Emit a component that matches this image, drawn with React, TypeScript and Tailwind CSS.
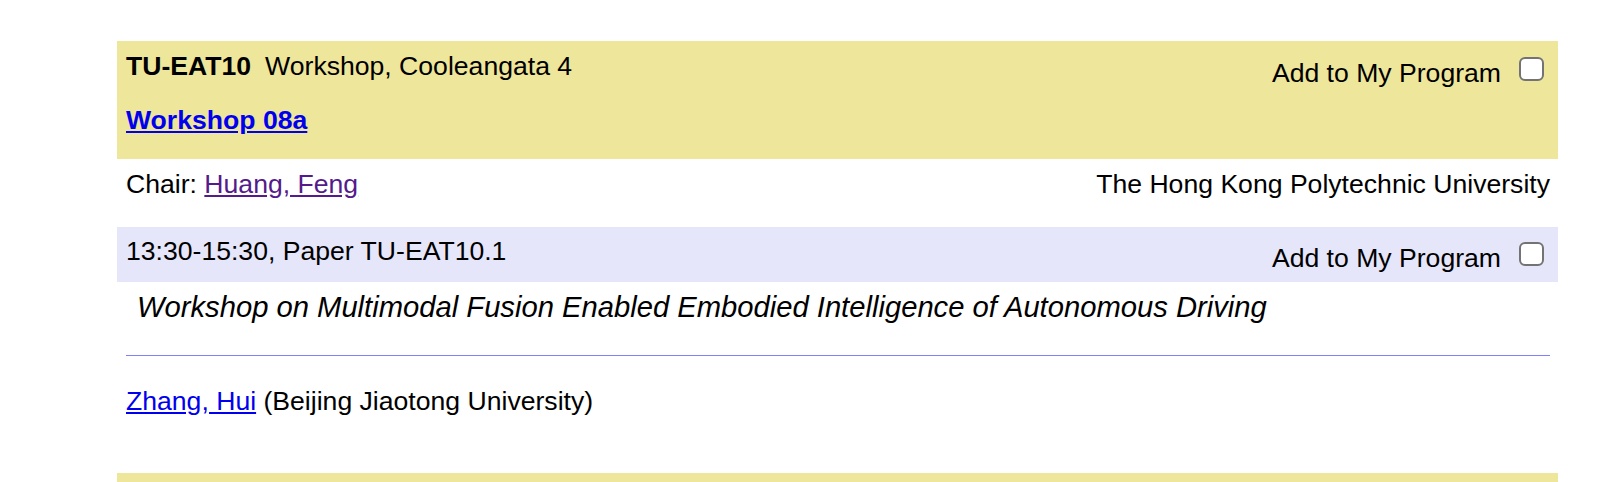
import React from "react";

const ProgramCheck: React.FC = () => (
  <span className="ml-[18px] mt-[-1px] inline-block h-[24px] w-[25px] rounded-[6px] border-2 border-[#737373] bg-white" />
);

const AddToProgram: React.FC<{ top: string }> = ({ top }) => (
  <div className={`flex items-start ${top}`}>
    <span className="leading-[30px]">Add to My Program</span>
    <ProgramCheck />
  </div>
);

export default function App() {
  return (
    <div
      className="h-[482px] w-[1616px] overflow-hidden bg-white pt-[41px] text-[26.6px] text-black"
      style={{ fontFamily: '"Liberation Sans", Arial, sans-serif' }}
    >
      <div className="ml-[117px] w-[1441px]">
        {/* session header */}
        <div className="flex h-[118px] justify-between bg-[#EEE69B] pl-[9px] pr-[14px]">
          <div className="pt-[10px]">
            <div className="leading-[30px]">
              <b>TU-EAT10</b>
              <span className="ml-[14px]">Workshop, Cooleangata 4</span>
            </div>
            <div className="mt-[24px] leading-[30px]">
              <a href="#" className="font-bold text-[#0000EE] underline">
                Workshop 08a
              </a>
            </div>
          </div>
          <AddToProgram top="pt-[17px]" />
        </div>

        {/* chair */}
        <div className="flex h-[68px] justify-between pl-[9px] pr-[8px] pt-[10px] leading-[30px]">
          <div>
            Chair:{" "}
            <a href="#" className="text-[#551A8B] underline">
              Huang, Feng
            </a>
          </div>
          <div>The Hong Kong Polytechnic University</div>
        </div>

        {/* paper row */}
        <div className="flex h-[55px] justify-between bg-[#E6E6FA] pl-[9px] pr-[14px]">
          <div className="pt-[9px] leading-[30px]">13:30-15:30, Paper TU-EAT10.1</div>
          <AddToProgram top="pt-[16px]" />
        </div>

        <div className="pl-[20px] pt-[10px] text-[29.2px] italic leading-[30px]">
          Workshop on Multimodal Fusion Enabled Embodied Intelligence of Autonomous Driving
        </div>

        <div className="ml-[9px] mt-[33px] h-px w-[1424px] bg-[#8080FF]" />

        <div className="pl-[9px] pt-[30px] leading-[30px]">
          <a href="#" className="text-[#0000EE] underline">
            Zhang, Hui
          </a>{" "}
          (Beijing Jiaotong University)
        </div>

        <div className="mt-[57px] h-[40px] bg-[#EEE69B]" />
      </div>
    </div>
  );
}
